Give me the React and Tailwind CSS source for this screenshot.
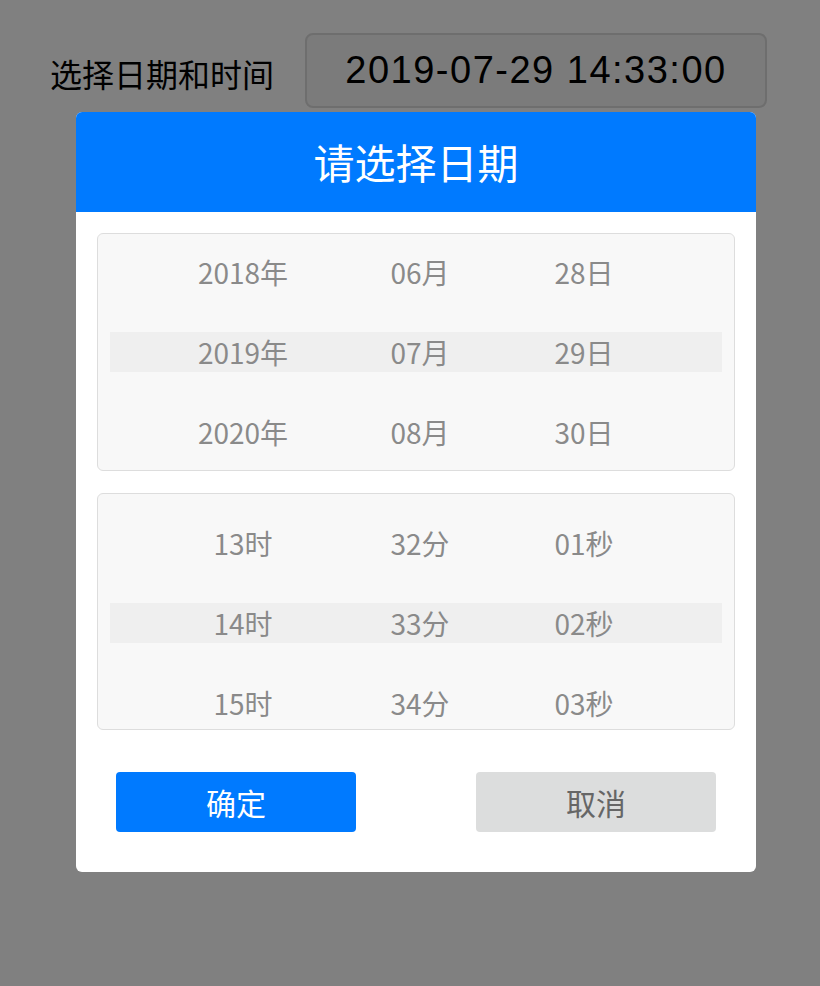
const dateRows = [
  ["2018年", "06月", "28日"],
  ["2019年", "07月", "29日"],
  ["2020年", "08月", "30日"],
];

const timeRows = [
  ["13时", "32分", "01秒"],
  ["14时", "33分", "02秒"],
  ["15时", "34分", "03秒"],
];

function Wheel({ rows, top, bottom }) {
  return (
    <div
      className={`flex flex-col gap-10 rounded-md border border-[#dddddd] bg-[#f8f8f8] px-3 ${top} ${bottom}`}
    >
      {rows.map((row, i) => (
        <div
          key={i}
          className={`flex h-10 items-center text-[28px] text-[#8a8a8a] ${i === 1 ? "bg-[#efefef]" : ""}`}
        >
          <div className="w-[266px] text-center">{row[0]}</div>
          <div className="w-[88px] text-center">{row[1]}</div>
          <div className="w-[240px] text-center">{row[2]}</div>
        </div>
      ))}
    </div>
  );
}

export default function App() {
  return (
    <div
      className="min-h-[986px] w-full bg-[#808080] pt-[33px]"
      style={{ fontFamily: '"Noto Sans CJK SC", "Noto Sans", sans-serif' }}
    >
      {/* top field */}
      <div className="flex items-center justify-between pl-[50px] pr-[53px]">
        <span className="pt-1 text-[32px] text-black">选择日期和时间</span>
        <div className="flex h-[75px] w-[462px] items-center justify-center rounded-lg border-2 border-[#6e6e6e] bg-[#7b7b7b] font-['Liberation_Sans',sans-serif] text-[38px] tracking-[1.5px] text-black">
          2019-07-29 14:33:00
        </div>
      </div>

      {/* dialog */}
      <div className="ml-[76px] mt-[4px] w-[680px] overflow-hidden rounded-md bg-white">
        <div className="flex h-[100px] items-center justify-center bg-[#007aff] text-[41px] text-white">
          请选择日期
        </div>
        <div className="flex flex-col gap-[22px] px-[21px] pt-[21px]">
          <Wheel rows={dateRows} top="pt-[18px]" bottom="pb-[18px]" />
          <Wheel rows={timeRows} top="pt-[29px]" bottom="pb-[6px]" />
        </div>
        <div className="flex justify-between px-10 pb-10 pt-[42px]">
          <button className="h-[60px] w-[240px] rounded bg-[#007aff] text-[30px] text-white">
            确定
          </button>
          <button className="h-[60px] w-[240px] rounded bg-[#dcdddd] text-[30px] text-[#666666]">
            取消
          </button>
        </div>
      </div>
    </div>
  );
}
